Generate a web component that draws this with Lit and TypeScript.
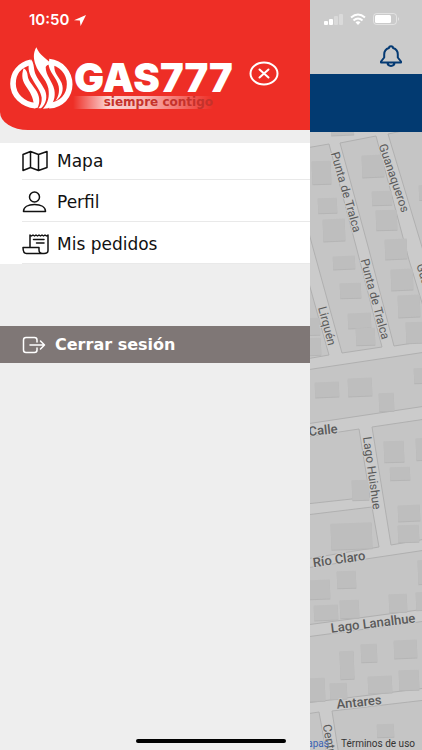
import { LitElement, html, svg, css } from "lit";
import { customElement } from "lit/decorators.js";

type Box = [number, number, number, number];

const BLOCKS = [
  "-4,16 19,12 47,118 72,215 32,221 0,105 -4,90",
  "30,11 66,4 99,128 116,184 116,209 84,214 59,118",
  "78,2 116,-6 116,129 112,115",
  "-4,140 0,155 19,223 -4,227",
  "-4,238 116,220 116,274 -4,292",
  "-4,305 49,297 60,365 -4,372",
  "62,295 116,287 116,407 81,413",
  "-4,383 62,375 69,415 -4,427",
  "-4,436 116,418 116,477 -4,493",
  "-4,505 116,489 116,556 -4,571",
  "-4,582 9,580 17,624 -4,624",
  "22,579 116,568 116,624 29,624",
];

const BUILDINGS: Box[] = [
  [21, -2, 23, 5], [2, 29, 19, 23], [8, 66, 19, 15], [13, 87, 22, 22],
  [52, 23, 22, 22], [62, 59, 20, 14], [66, 78, 21, 20], [75, 107, 22, 20],
  [23, 124, 22, 13], [109, 53, 7, 15], [81, 137, 22, 21], [30, 151, 21, 15],
  [88, 163, 22, 22], [38, 181, 23, 15], [46, 196, 19, 17], [96, 190, 20, 21],
  [-4, 186, 14, 17], [-4, 206, 15, 17], [5, 250, 24, 15], [38, 246, 24, 18],
  [69, 261, 15, 18], [104, 236, 12, 15], [74, 309, 20, 21], [80, 335, 20, 13],
  [106, 306, 10, 22], [42, 348, 17, 20], [21, 391, 41, 26], [88, 373, 22, 16],
  [88, 393, 21, 17], [27, 439, 19, 17], [-4, 448, 24, 19], [4, 473, 24, 15],
  [30, 468, 19, 18], [79, 462, 18, 18], [108, 428, 8, 24], [106, 460, 10, 18],
  [30, 519, 14, 28], [51, 512, 16, 18], [84, 508, 23, 18], [-4, 546, 19, 23],
  [20, 551, 17, 16], [58, 544, 24, 17], [89, 538, 20, 20], [67, 592, 17, 13],
];

const STREETS: { name: string; x: number; y: number; turn: number }[] = [
  { name: "Punta de Tralca", x: 36, y: 60, turn: 74 },
  { name: "Guanaqueros", x: 84, y: 46, turn: 71 },
  { name: "Punta de Tralca", x: 65, y: 167, turn: 75 },
  { name: "Lirquén", x: 17, y: 194, turn: 75 },
  { name: "Guanaqueros", x: 121, y: 166, turn: 72 },
  { name: "Lago Huishue", x: 62, y: 341, turn: 82 },
  { name: "Central", x: 20, y: 611, turn: 80 },
];

const AVENUES: { name: string; x: number; y: number; turn: number }[] = [
  { name: "Calle", x: 13, y: 298, turn: -6 },
  { name: "Río Claro", x: 29, y: 427, turn: -8 },
  { name: "Lago Lanalhue", x: 63, y: 491, turn: -7 },
  { name: "Antares", x: 49, y: 570, turn: -6 },
];

@customElement("street-map")
export class StreetMap extends LitElement {
  static styles = css`
    :host { display: block; position: relative; overflow: hidden; background: #cbcbcb; }
    .canvas { position: absolute; inset: 0; width: 100%; height: 100%; display: block; }
    .block { fill: #c5c5c5; stroke: #b0b0b0; stroke-width: 1; }
    .building { fill: #bebebe; }
    .shade { fill: #b5b5b5; }
    .label {
      font-family: Roboto, sans-serif; font-size: 12px; fill: #5a5a5a;
      stroke: #cbcbcb; stroke-width: 2; paint-order: stroke;
      text-anchor: middle; dominant-baseline: central;
    }
    .avenue { font-size: 13px; font-weight: 500; }
    .credits {
      position: absolute; right: 7px; bottom: 0; display: flex; gap: 12px;
      font: 10px/12px Roboto, sans-serif; white-space: nowrap;
    }
    .credits a { color: #333; text-decoration: none; }
    .credits .maps { color: #3c63b4; }
  `;

  render() {
    const label = (s: { name: string; x: number; y: number; turn: number }, cls: string) =>
      svg`<text class=${cls} transform="translate(${s.x} ${s.y}) rotate(${s.turn})">${s.name}</text>`;
    return html`
      <svg class="canvas" viewBox="0 0 112 618" preserveAspectRatio="xMinYMin slice" role="img" aria-label="Mapa">
        ${BLOCKS.map((p) => svg`<polygon class="block" points=${p}></polygon>`)}
        ${BUILDINGS.map(([x, y, w, h]) => svg`
          <g transform="rotate(-2 ${x + w / 2} ${y + h / 2})">
            <rect class="shade" x=${x} y=${y + 1} width=${w} height=${h}></rect>
            <rect class="building" x=${x} y=${y} width=${w} height=${h}></rect>
          </g>`)}
        ${STREETS.map((s) => label(s, "label"))}
        ${AVENUES.map((s) => label(s, "label avenue"))}
      </svg>
      <div class="credits"><a class="maps" href="#mapas">Mapas</a><a href="#terminos">Términos de uso</a></div>
    `;
  }
}

const mapIcon = svg`<path d="M1 4.500 8.500 1.500 16.500 4.500 25 1.500V17.500L16.500 20.500 8.500 17.500 1 20.500ZM8.500 1.500V17.500M16.500 4.500V20.500"/>`;
const personIcon = svg`<circle cx="12.500" cy="6" r="5"/><path d="M1.500 20.500C1.500 16 6 13.500 12.500 13.500S23.500 16 23.500 20.500Z"/>`;
const orderIcon = svg`<path d="M8 13.500V2l1.500 1L11 2l1.500 1L14 2l1.500 1L17 2l1.500 1L20 2l1.500 1L23 2l1.500 1L26 2V17.500c0 2-1.500 3-4 3H4.500C2 20.500 1 18.500 1 14.500H17V17c0 2 1 3.500 3.500 3.500M11.500 6.500H22M14.500 10H22"/>`;
const exitIcon = svg`<path d="M15 6V4c0-1.700-.8-2.500-2.500-2.500H4C2.300 1.500 1.500 2.300 1.500 4v10c0 1.700.8 2.500 2.500 2.500h8.500c1.700 0 2.500-.8 2.500-2.500V12M8 9H22.500M18.500 5 22.500 9 18.500 13"/>`;

@customElement("app-root")
export class AppRoot extends LitElement {
  static styles = css`
    :host {
      display: grid; grid-template-columns: 310fr 112fr; position: relative;
      min-height: 100vh; overflow: hidden; font-family: "DejaVu Sans", sans-serif; color: #111;
    }
    button { font: inherit; color: inherit; background: none; border: 0; padding: 0; cursor: pointer; }
    svg { display: block; flex: none; }
    .line { fill: none; stroke: currentColor; stroke-width: 1.5; stroke-linejoin: round; stroke-linecap: round; }

    .drawer { display: flex; flex-direction: column; background: #eee; min-width: 0; }
    .top {
      box-sizing: border-box; height: 130px; padding: 11px 0 0 10px;
      background: #ee2e26; color: #fff; border-bottom-left-radius: 28px 18px;
    }
    .clock { display: flex; align-items: center; gap: 5px; padding-left: 19px; font: 600 15px/18px Inter, sans-serif; }
    .brand { display: flex; align-items: flex-start; margin-top: 18px; }
    .ring { fill: none; stroke: #fff; stroke-width: 17; }
    .flame { fill: #fff; }
    .name { display: flex; flex-direction: column; padding-top: 13px; width: 166px; }
    .word { font: 900 40px/36px Inter, sans-serif; padding-left: 1px; }
    .tag {
      margin-right: 26px; text-align: right; color: #c5322b;
      font: bold 12px/13px "DejaVu Sans", sans-serif; white-space: nowrap;
      background: linear-gradient(90deg, #fff0, #fffc 25%, #fffa 50%, #fff0);
    }
    .close { margin: 14px 0 0 10px; }
    .close .line { stroke-width: 2; }

    .menu { list-style: none; margin: 13px 0 0; padding: 0; background: #fff; }
    .menu li { display: flex; align-items: center; height: 42px; }
    .menu li:first-child { height: 37px; }
    .item {
      display: flex; align-items: center; gap: 8px; flex: 1; align-self: stretch;
      margin-left: 22px; border-bottom: 1px solid #e9e9e9; font-size: 17px; text-align: left;
    }
    .menu li + li .item { padding-top: 3px; }
    .menu svg { width: 27px; }
    .logout {
      display: flex; align-items: center; gap: 9px; height: 37px; margin-top: 62px; padding-left: 22px;
      background: #7f7776; color: #fff; font-size: 16px; font-weight: bold;
    }

    .page { display: flex; flex-direction: column; min-width: 0; }
    .bar {
      display: flex; flex-direction: column; align-items: flex-end; box-sizing: border-box;
      height: 74px; padding: 13px 20px 0 0; background: #cbcbcb; color: #053a73;
    }
    .signals { display: flex; align-items: center; gap: 7px; margin-right: 2px; }
    .bell { margin-top: 20px; }
    .bell .line { stroke-width: 2; }
    .banner { height: 58px; background: #023a71; }
    .page street-map { flex: 1; }
    .home {
      position: absolute; left: 50%; bottom: 7px; width: 150px; height: 4px;
      transform: translateX(-50%); border-radius: 2px; background: #000;
    }
  `;

  render() {
    const items = [
      { text: "Mapa", icon: mapIcon },
      { text: "Perfil", icon: personIcon },
      { text: "Mis pedidos", icon: orderIcon },
    ];
    return html`
      <nav class="drawer">
        <header class="top">
          <div class="clock">
            <span>10:50</span>
            <svg width="12" height="11" viewBox="0 0 12 11"><path d="M12 0 0 5.200 5.800 5.600 6.600 11Z" fill="#fff"/></svg>
          </div>
          <div class="brand">
            <svg width="63" height="63" viewBox="5 8 189 189" role="img" aria-label="Gas 777">
              <path class="ring" d="M68 54C34 62 14 86 14 118C14 152 42 180 82 184M122 52C160 56 184 86 184 120C184 154 160 182 122 184"/>
              <path class="flame" d="M46 72C38 94 42 112 56 130C70 150 76 166 78 192L88 190C96 172 94 154 82 136C70 118 60 110 58 94C57 84 54 76 46 72Z"/>
              <path class="flame" d="M68 45C56 64 60 84 72 104C84 126 98 142 100 160C101 174 97 184 90 192L98 192C114 178 118 158 110 138C98 114 82 100 78 78C76 66 76 54 68 45Z"/>
              <path class="flame" d="M84 9C73 28 76 46 82 62C90 86 114 104 120 132C124 156 120 176 104 193L120 192C136 178 142 158 138 136C132 110 112 94 112 68C116 60 124 60 128 58C112 40 94 34 84 9Z"/>
              <path class="flame" d="M120 54C120 84 146 100 151 126C154 144 150 158 141 170C160 158 168 138 160 116C153 99 136 88 138 62Z"/>
            </svg>
            <div class="name">
              <span class="word">GAS777</span>
              <span class="tag">siempre contigo</span>
            </div>
            <button class="close" aria-label="Cerrar menú">
              <svg class="line" width="30" height="25" viewBox="0 0 30 25"><ellipse cx="15" cy="12.500" rx="13.500" ry="11"/><path d="M10.500 8.500 19.500 16.500M19.500 8.500 10.500 16.500"/></svg>
            </button>
          </div>
        </header>
        <ul class="menu">
          ${items.map((i) => html`
            <li><button class="item">
              <svg class="line" height="22" viewBox="0 0 27 22">${i.icon}</svg>${i.text}
            </button></li>`)}
        </ul>
        <button class="logout">
          <svg class="line" width="24" height="18" viewBox="0 0 24 18">${exitIcon}</svg>Cerrar sesión
        </button>
      </nav>
      <main class="page">
        <header class="bar">
          <div class="signals">
            <svg width="19" height="12" viewBox="0 0 19 12" fill="#fff"><rect y="8" width="4" height="4" rx="1"/><rect x="5" y="6" width="4" height="6" rx="1"/><g opacity=".3"><rect x="10" y="3" width="4" height="9" rx="1"/><rect x="15" y="1" width="4" height="11" rx="1"/></g></svg>
            <svg width="16" height="12" viewBox="0 0 16 12" fill="none" stroke="#fff" stroke-width="2"><path d="M1 4.500Q8-1.500 15 4.500M3.500 7.500Q8 3.500 12.500 7.500"/><path d="M5.500 9.200Q8 7.500 10.500 9.200L8 12Z" fill="#fff" stroke="none"/></svg>
            <svg width="27" height="12" viewBox="0 0 27 12"><rect x=".5" y=".5" width="23" height="11" rx="3" fill="none" stroke="#fff" opacity=".45"/><rect x="2" y="2" width="16" height="8" rx="1.500" fill="#fff"/><path d="M25 4q2 2 0 4Z" fill="#fff" opacity=".5"/></svg>
          </div>
          <button class="bell" aria-label="Notificaciones">
            <svg class="line" width="22" height="22" viewBox="0 0 22 22"><path d="M9 3C9 .6 13 .6 13 3C16.500 4 17.800 6.500 17.800 9.500V12.500L21 16.500V17.500H1V16.500L4.200 12.500V9.500C4.200 6.500 5.500 4 9 3ZM7.500 17.500C7.500 22 14.500 22 14.500 17.500"/></svg>
          </button>
        </header>
        <div class="banner"></div>
        <street-map></street-map>
      </main>
      <div class="home"></div>
    `;
  }
}
